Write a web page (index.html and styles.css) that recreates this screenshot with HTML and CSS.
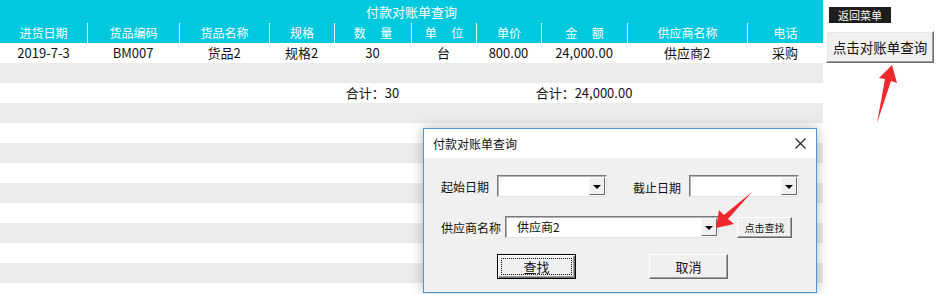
FILE: index.html
```html
<!DOCTYPE html>
<html lang="zh-CN">
<head>
<meta charset="UTF-8">
<title>付款对账单查询</title>
<link rel="stylesheet" href="styles.css">
</head>
<body>
<div class="page">
  <!-- 对账单表格 -->
  <div class="sheet">
    <div class="sheet-title">付款对账单查询</div>
    <div class="grid head">
      <span>进货日期</span><span>货品编码</span><span>货品名称</span><span>规格</span>
      <span class="spaced">数　 量</span><span class="spaced">单　 位</span><span>单价</span>
      <span class="spaced">金　 额</span><span>供应商名称</span><span>电话</span>
    </div>
    <div class="grid row">
      <span>2019-7-3</span><span>BM007</span><span>货品2</span><span>规格2</span>
      <span>30</span><span>台</span><span>800.00</span><span>24,000.00</span><span>供应商2</span><span>采购</span>
    </div>
    <div class="grid row alt"></div>
    <div class="grid row">
      <span></span><span></span><span></span><span></span>
      <span>合计：30</span><span></span><span></span><span>合计：24,000.00</span><span></span><span></span>
    </div>
    <div class="grid row alt"></div>
    <div class="grid row"></div>
    <div class="grid row alt"></div>
    <div class="grid row"></div>
    <div class="grid row alt"></div>
    <div class="grid row"></div>
    <div class="grid row alt"></div>
    <div class="grid row"></div>
    <div class="grid row alt"></div>
    <div class="grid row"></div>
  </div>

  <!-- 右侧按钮 -->
  <div class="side">
    <div class="back-menu">返回菜单</div>
    <button class="query-btn">点击对账单查询</button>
  </div>
</div>

<!-- 查询窗口 -->
<div class="dialog">
  <div class="dialog-title">
    <span>付款对账单查询</span>
    <svg class="close" width="11" height="11" viewBox="0 0 11 11">
      <path d="M0.5 0.5 L10.5 10.5 M10.5 0.5 L0.5 10.5" stroke="#222" stroke-width="1.1" fill="none"/>
    </svg>
  </div>
  <div class="dialog-body">
    <div class="form-row">
      <label class="lbl lbl-date">起始日期</label>
      <div class="combo combo-date"><span class="combo-text"></span><span class="drop"></span></div>
      <label class="lbl lbl-date lbl-end">截止日期</label>
      <div class="combo combo-date"><span class="combo-text"></span><span class="drop"></span></div>
    </div>
    <div class="form-row row-name">
      <label class="lbl lbl-name">供应商名称</label>
      <div class="combo combo-name"><span class="combo-text">供应商2</span><span class="drop"></span></div>
      <button class="btn btn-small">点击查找</button>
    </div>
    <div class="form-row actions">
      <button class="btn btn-default"><span class="focus">查找</span></button>
      <button class="btn btn-cancel">取消</button>
    </div>
  </div>
</div>

<!-- 红色箭头标注 -->
<svg class="marks" width="941" height="294" viewBox="0 0 941 294">
  <polygon points="892,65 897,83 891,81 877,123 885,79 879,78" fill="#f0282d"/>
  <polygon points="716,228 719,210 724,215 752,192 728,219 734,224" fill="#f0282d"/>
</svg>
</body>
</html>
```

FILE: styles.css
```css
html, body {
    margin: 0;
    padding: 0;
    width: 941px;
    height: 294px;
    overflow: hidden;
    background-color: #fff;
    font-family: "Noto Sans CJK SC", "Microsoft YaHei", sans-serif;
    color: #111;
}

.page {
    display: flex;
    align-items: flex-start;
}

/* 表格 */
.sheet {
    width: 823px;
    flex: none;
}

.sheet-title {
    height: 23px;
    line-height: 23px;
    background-color: #00c8de;
    color: #fff;
    font-size: 13px;
    text-align: center;
}

.grid {
    display: grid;
    grid-template-columns: 87px 92px 90px 65px 77px 65px 65px 86px 120px 76px;
    height: 20px;
    line-height: 20px;
    font-size: 13px;
}

/* 内容居中，超出时两边溢出 */
.grid span {
    display: flex;
    justify-content: center;
    white-space: pre;
}

.head {
    background-color: #00c8de;
    color: #fff;
    font-size: 12px;
}

.head span + span {
    border-left: 1px solid #e6fafd;
}

.row {
    background-color: #fff;
}

.row.alt {
    background-color: #ebebeb;
}

/* 右侧 */
.side {
    flex: 1;
    display: flex;
    flex-direction: column;
    align-items: flex-start;
    padding-top: 7px;
}

.back-menu {
    margin-left: 6px;
    width: 62px;
    height: 16px;
    line-height: 16px;
    background-color: #1e1e1e;
    color: #fff;
    font-size: 11px;
    text-align: center;
}

.query-btn {
    margin: 8px 0 0 3px;
    width: 108px;
    height: 32px;
    padding: 0;
    font-family: inherit;
    font-size: 13.5px;
    color: #111;
    background-color: #f0f0f0;
    border: 1px solid;
    border-color: #fff #6a6a6a #6a6a6a #fff;
    box-shadow: inset -1px -1px #a0a0a0, inset 1px 1px #e6e6e6;
}

/* 查询窗口 */
.dialog {
    position: absolute;
    left: 423px;
    top: 128px;
    width: 394px;
    height: 165px;
    box-sizing: border-box;
    border: 1px solid #4a98d8;
    background-color: #f0f0f0;
    box-shadow: 0 0 12px rgba(0, 0, 0, 0.28);
    font-size: 12px;
}

.dialog-title {
    height: 29px;
    background-color: #fff;
    display: flex;
    align-items: center;
    justify-content: space-between;
    padding: 0 10px 0 9px;
    font-size: 12px;
}

.close {
    display: block;
}

.dialog-body {
    padding: 17px 0 0 17px;
}

.form-row {
    display: flex;
    align-items: center;
    height: 22px;
}

.row-name {
    margin-top: 19px;
}

.actions {
    margin-top: 16px;
    height: 25px;
    padding-left: 56px;
}

.lbl {
    flex: none;
    white-space: nowrap;
}

.lbl-date {
    width: 56px;
}

.lbl-end {
    margin-left: 26px;
    padding-top: 3px;
}

.lbl-name {
    width: 64px;
}

/* 下拉框 */
.combo {
    box-sizing: border-box;
    height: 22px;
    display: flex;
    align-items: stretch;
    background-color: #fff;
    border: 1px solid;
    border-color: #7a7a7a #e3e3e3 #e3e3e3 #7a7a7a;
    box-shadow: inset 1px 1px #b4b4b4;
}

.combo-date {
    width: 110px;
}

.combo-name {
    width: 214px;
}

.combo-text {
    flex: 1;
    padding-left: 11px;
    line-height: 20px;
    font-size: 12px;
}

.drop {
    position: relative;
    width: 16px;
    margin: 1px 1px 1px 0;
    box-sizing: border-box;
    background-color: #f0f0f0;
    border: 1px solid;
    border-color: #f8f8f8 #6a6a6a #6a6a6a #f8f8f8;
}

.drop::after {
    content: "";
    position: absolute;
    left: 3px;
    top: 7px;
    border-left: 4px solid transparent;
    border-right: 4px solid transparent;
    border-top: 4px solid #000;
}

/* 按钮 */
.btn {
    box-sizing: border-box;
    padding: 0;
    font-family: inherit;
    color: #111;
    background-color: #f0f0f0;
    border: 1px solid;
    border-color: #fff #6a6a6a #6a6a6a #fff;
    box-shadow: inset -1px -1px #a0a0a0;
}

.btn-small {
    margin-left: 18px;
    width: 55px;
    height: 21px;
    font-size: 10px;
}

.btn-default,
.btn-cancel {
    width: 79px;
    height: 25px;
    font-size: 13px;
}

.btn-default {
    border: 1px solid #000;
    box-shadow: inset 1px 1px #fff, inset -1px -1px #6a6a6a, inset -2px -2px #a0a0a0;
    display: flex;
    padding: 3px;
}

.focus {
    flex: 1;
    border: 1px dotted #111;
    line-height: 16px;
}

.btn-cancel {
    margin-left: 73px;
}

.marks {
    position: absolute;
    left: 0;
    top: 0;
    pointer-events: none;
}
```
